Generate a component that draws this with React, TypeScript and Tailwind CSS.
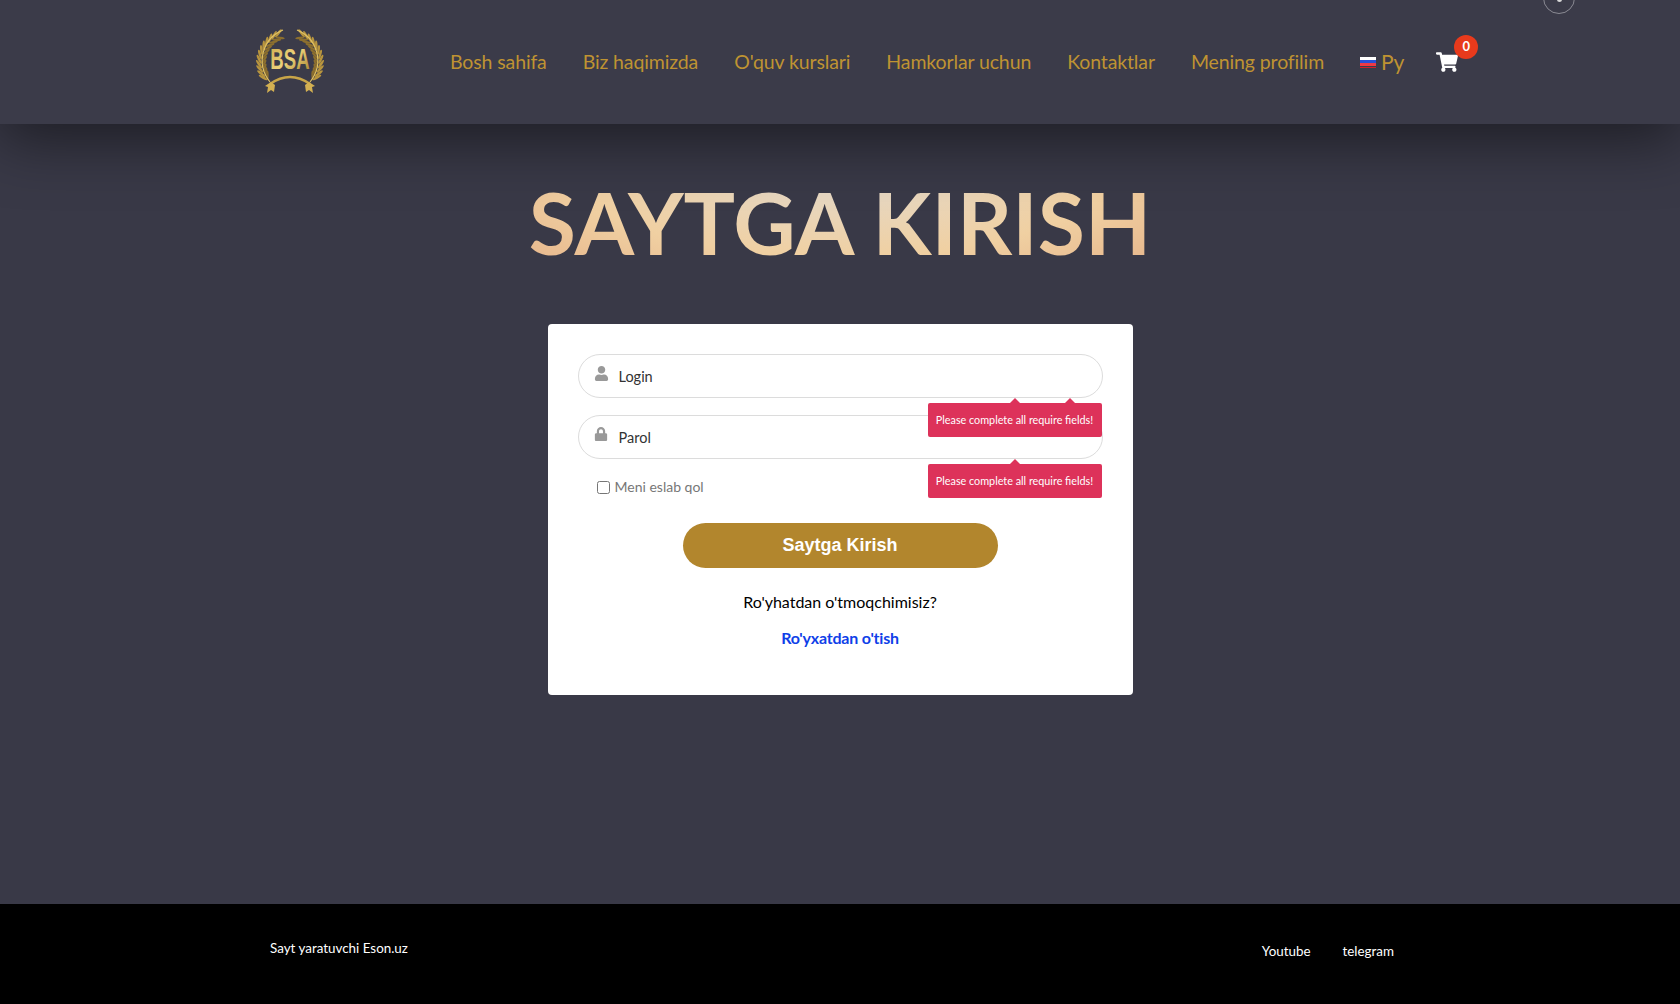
import { FaLock, FaShoppingCart, FaUser } from 'react-icons/fa';

const navLinks = ['Bosh sahifa', 'Biz haqimizda', "O'quv kurslari", 'Hamkorlar uchun', 'Kontaktlar', 'Mening profilim'];

function Wreath() {
  const angles = [22, 31, 40, 49, 58, 67, 76, 85, 94, 103, 112, 120];
  return (
    <g>
      {angles.map((deg) => {
        const a = (deg * Math.PI) / 180;
        const out = { x: 35 - 31 * Math.sin(a), y: 33 - 31 * Math.cos(a) };
        const inner = { x: 35 - 26 * Math.sin(a), y: 33 - 26 * Math.cos(a) };
        return (
          <g key={deg}>
            <ellipse cx={out.x} cy={out.y} rx="5" ry="1.3" fill="#b8953e" transform={`rotate(${-deg - 30} ${out.x} ${out.y})`} />
            <ellipse cx={inner.x} cy={inner.y} rx="4.5" ry="1.2" fill="#8c6f2e" transform={`rotate(${-deg + 30} ${inner.x} ${inner.y})`} />
          </g>
        );
      })}
      <path d="M28 1 C8 9 0 34 15 53" fill="none" stroke="#e0c266" strokeWidth="1.1" />
    </g>
  );
}

function Logo() {
  return (
    <svg width="70" height="66" viewBox="0 0 70 66" className="block overflow-visible">
      <defs>
        <linearGradient id="gold" x1="0" y1="0" x2="1" y2="1">
          <stop offset="0" stopColor="#c9a64a" />
          <stop offset="0.5" stopColor="#edd27a" />
          <stop offset="1" stopColor="#a27d2a" />
        </linearGradient>
      </defs>
      <Wreath />
      <g transform="translate(70 0) scale(-1 1)">
        <Wreath />
      </g>
      <path d="M15 55 Q35 41 55 55" fill="none" stroke="#c8a548" strokeWidth="2.4" />
      <path d="M16 53 l-6 4 3 1 -1 6 4-3 3 2 1-7z M54 53 l6 4 -3 1 1 6 -4-3 -3 2 -1-7z" fill="#d3b052" />
      <text x="35" y="40" textAnchor="middle" transform="translate(35 0) scale(0.62 1) translate(-35 0)" fontFamily="Liberation Sans, sans-serif" fontWeight="700" fontSize="30" fill="url(#gold)">BSA</text>
    </svg>
  );
}

function Tip({ className }: { className: string }) {
  return (
    <div className={`absolute left-[380px] w-[174px] h-[34px] rounded-[2px] bg-[#dd325a] text-white text-[10.8px] flex items-center justify-center ${className}`}>
      <span className="absolute -top-[5px] left-1/2 -ml-[5px] w-0 h-0 border-x-[5px] border-x-transparent border-b-[5px] border-b-[#dd325a]" />
      Please complete all require fields!
    </div>
  );
}

export default function App() {
  return (
    <div className="min-h-[1004px] flex flex-col bg-[#393947] font-['Lato',sans-serif] overflow-hidden">
      <header className="relative z-10 h-[124px] shrink-0 bg-[#3b3b49] shadow-[0_15px_60px_0_rgba(0,0,0,0.5)]">
        <div className="flex items-center h-full pl-[255px]">
          <Logo />
          <nav className="flex items-center gap-[36px] ml-[125px] text-[19.5px] text-[#bf9332] tracking-[-0.12px]">
            {navLinks.map((link) => (
              <a key={link} href="#">{link}</a>
            ))}
            <a href="#" className="flex items-center gap-[5px] text-[21px]">
              <span className="flex flex-col w-4 h-[11px] border-b border-b-[#d0202a]">
                <span className="h-1/3 bg-white" />
                <span className="h-1/3 bg-[#2a4fd6]" />
                <span className="h-1/3 bg-[#ee3a45]" />
              </span>
              Ру
            </a>
          </nav>
          <div className="relative ml-[32px]">
            <FaShoppingCart size={22} color="white" />
            <span className="absolute -top-[16px] left-[18px] w-6 h-6 rounded-full bg-[#e83a1c] text-white text-[13px] font-bold flex items-center justify-center">0</span>
          </div>
        </div>
        <div className="absolute -top-[18px] left-[1543px] w-8 h-8 rounded-full border border-[#8a8a93] flex items-end justify-center pb-[11px]">
          <span className="w-[5px] h-[5px] rounded-full bg-[#d8d8d8]" />
        </div>
      </header>

      <main className="flex-1 flex flex-col items-center">
        <h1 className="mt-[48px] text-[86px] leading-[100px] font-bold text-transparent bg-clip-text bg-[radial-gradient(ellipse_at_50%_0%,#e3dace_0%,#f0d0a2_60%,#e6b48a_100%)]">
          SAYTGA KIRISH
        </h1>
        <div className="relative mt-[52px] w-[585px] h-[371px] bg-white rounded-[4px] px-[30px] pt-[30px]">
          <div className="flex items-center h-[44px] pt-px rounded-full border border-[#dcdcdc] pl-[15px] text-[14.5px] text-[#333]">
            <span className="w-[25px] -mt-[7px]"><FaUser size={15} color="#999" /></span>
            Login
          </div>
          <div className="flex items-center h-[44px] pt-px mt-[17px] rounded-full border border-[#dcdcdc] pl-[15px] text-[14.5px] text-[#333]">
            <span className="w-[25px] -mt-[7px]"><FaLock size={14} color="#999" /></span>
            Parol
          </div>
          <label className="flex items-center mt-[17px] ml-[19px] text-[14px] text-[#777]">
            <input type="checkbox" className="w-[13px] h-[13px] mr-[5px] mt-[2px]" />
            Meni eslab qol
          </label>
          <button className="block mx-auto mt-[26px] w-[315px] h-[45px] rounded-full bg-[#b2862d] text-white text-[18px] font-bold font-['Liberation_Sans',sans-serif]">
            Saytga Kirish
          </button>
          <p className="mt-[21px] text-center text-[16px] leading-[25px] text-black">Ro'yhatdan o'tmoqchimisiz?</p>
          <a href="#" className="block mt-[11px] text-center text-[16px] leading-[25px] font-bold tracking-[-0.2px] text-[#0f3fe8]">Ro'yxatdan o'tish</a>
          <Tip className="top-[79px]" />
          <span className="absolute left-[517px] top-[74px] w-0 h-0 border-x-[5px] border-x-transparent border-b-[5px] border-b-[#dd325a]" />
          <Tip className="top-[140px]" />
        </div>
      </main>

      <footer className="relative z-10 h-[100px] shrink-0 bg-black text-white text-[13.4px] flex justify-between pl-[270px] pr-[286px]">
        <p className="mt-[34px]">Sayt yaratuvchi Eson.uz</p>
        <div className="flex gap-[32px] mt-[37px]">
          <a href="#">Youtube</a>
          <a href="#">telegram</a>
        </div>
      </footer>
    </div>
  );
}
